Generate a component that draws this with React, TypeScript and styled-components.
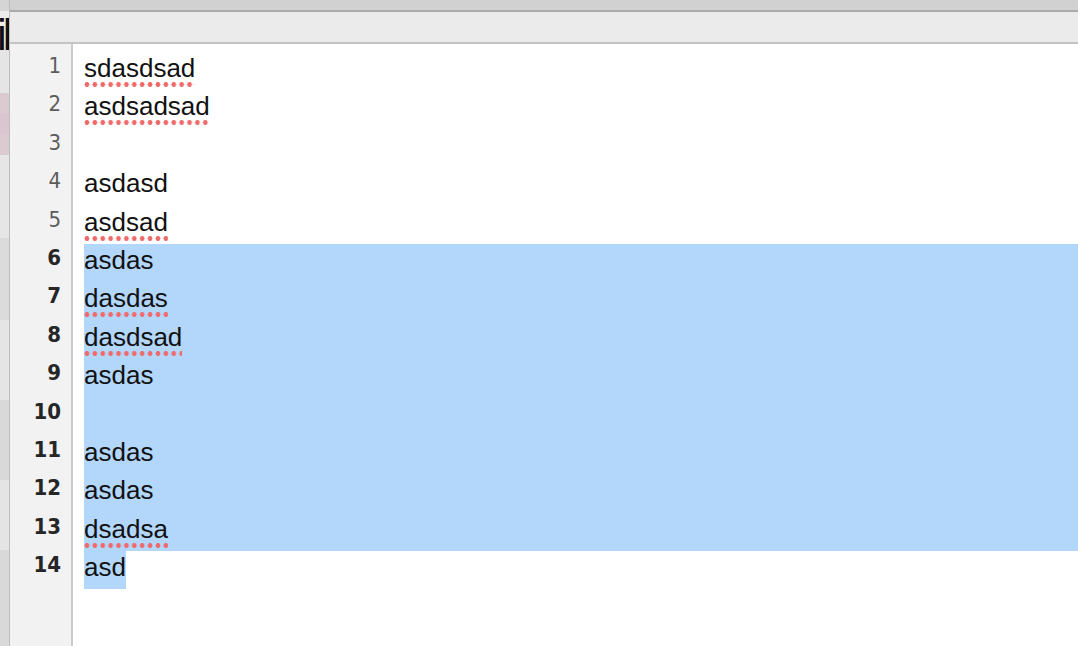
import React from "react";
import styled, { createGlobalStyle } from "styled-components";

type Line = { text: string; typo?: boolean; sel?: "full" | "part" };

const lines: Line[] = [
  { text: "sdasdsad", typo: true },
  { text: "asdsadsad", typo: true },
  { text: "" },
  { text: "asdasd" },
  { text: "asdsad", typo: true },
  { text: "asdas", sel: "full" },
  { text: "dasdas", typo: true, sel: "full" },
  { text: "dasdsad", typo: true, sel: "full" },
  { text: "asdas", sel: "full" },
  { text: "", sel: "full" },
  { text: "asdas", sel: "full" },
  { text: "asdas", sel: "full" },
  { text: "dsadsa", typo: true, sel: "full" },
  { text: "asd", sel: "part" },
];

// background window peeking out on the left
const bands = [
  { h: 11, c: "#d5d5d5" },
  { h: 32, c: "#ededed", label: "il" },
  { h: 50, c: "#e5e5e5" },
  { h: 20, c: "#dccad1" },
  { h: 21, c: "#dac6ce" },
  { h: 21, c: "#dccad1" },
  { h: 83, c: "#e6e6e6" },
  { h: 82, c: "#dbdbdb" },
  { h: 80, c: "#e5e5e5" },
  { h: 80, c: "#d9d9d9" },
  { h: 70, c: "#e4e4e4" },
  { h: 96, c: "#d9d9d9" },
];

export default function App() {
  return (
    <>
      <GlobalStyle />
      <Window>
        <Strip>
          {bands.map((b, i) => (
            <Band key={i} $h={b.h} $bg={b.c}>
              {b.label && <Peek>{b.label}</Peek>}
            </Band>
          ))}
        </Strip>
        <Main>
          <TitleBar />
          <Toolbar />
          <EditorArea>
            <Gutter>
              {lines.map((l, i) => (
                <LineNumber key={i} $active={!!l.sel}>
                  {i + 1}
                </LineNumber>
              ))}
            </Gutter>
            <Editor>
              {lines.map((l, i) => (
                <Row key={i} $selected={l.sel === "full"}>
                  {l.sel === "part" ? (
                    <PartSel>
                      <Word $typo={!!l.typo}>{l.text}</Word>
                    </PartSel>
                  ) : (
                    <Word $typo={!!l.typo}>{l.text}</Word>
                  )}
                </Row>
              ))}
            </Editor>
          </EditorArea>
        </Main>
      </Window>
    </>
  );
}

const GlobalStyle = createGlobalStyle`
html, body {
  margin: 0;
  padding: 0;
  height: 100%;
  overflow: hidden;
  background: #ffffff;
}
#root {
  height: 100%;
}
`;

const Window = styled.div`
  display: flex;
  height: 646px;
  width: 1078px;
  overflow: hidden;
`;

const Strip = styled.div`
  width: 9px;
  flex: none;
  border-right: 1px solid #bdbdbd;
  overflow: hidden;
`;

const Band = styled.div<{ $h: number; $bg: string }>`
  height: ${({ $h }) => $h}px;
  background: ${({ $bg }) => $bg};
`;

const Peek = styled.div`
  font-family: "Liberation Sans", Arial, sans-serif;
  font-size: 44px;
  line-height: 44px;
  color: #111;
  letter-spacing: -4px;
  margin-left: -3px;
  padding-top: 2px;
  white-space: nowrap;
`;

const Main = styled.div`
  flex: 1;
  display: flex;
  flex-direction: column;
  min-width: 0;
`;

const TitleBar = styled.div`
  height: 10px;
  background: #d1d1d1;
  border-bottom: 2px solid #ababab;
`;

const Toolbar = styled.div`
  height: 30px;
  background: #ebebeb;
  border-bottom: 2px solid #c3c3c3;
`;

const EditorArea = styled.div`
  flex: 1;
  display: flex;
  min-height: 0;
`;

const Gutter = styled.div`
  width: 51px;
  flex: none;
  padding: 8px 10px 0 0;
  background: #f2f2f2;
  border-right: 2px solid #cbcbcb;
  text-align: right;
`;

const LineNumber = styled.div<{ $active: boolean }>`
  height: 38.4px;
  line-height: 28px;
  font-family: "Liberation Sans Narrow", "DejaVu Sans Condensed", sans-serif;
  font-size: 22px;
  font-weight: ${({ $active }) => ($active ? 700 : 400)};
  color: ${({ $active }) => ($active ? "#262626" : "#5c5c5c")};
`;

const Editor = styled.div`
  flex: 1;
  padding: 8px 0 0 11px;
  background: #ffffff;
`;

const Row = styled.div<{ $selected: boolean }>`
  height: 38.4px;
  line-height: 32px;
  font-family: "Liberation Sans", Arial, sans-serif;
  font-size: 26px;
  color: #111;
  white-space: pre;
  background: ${({ $selected }) => ($selected ? "#b3d6fb" : "transparent")};
`;

const PartSel = styled.span`
  display: inline-block;
  vertical-align: top;
  height: 38.4px;
  background: #b3d6fb;
`;

const Word = styled.span<{ $typo: boolean }>`
  padding-bottom: 4px;
  background-image: ${({ $typo }) =>
    $typo
      ? "radial-gradient(circle at center, #ef6b6b 2.2px, rgba(239,107,107,0) 2.7px)"
      : "none"};
  background-repeat: repeat-x;
  background-size: 7.9px 5px;
  background-position: -1px 100%;
`;
